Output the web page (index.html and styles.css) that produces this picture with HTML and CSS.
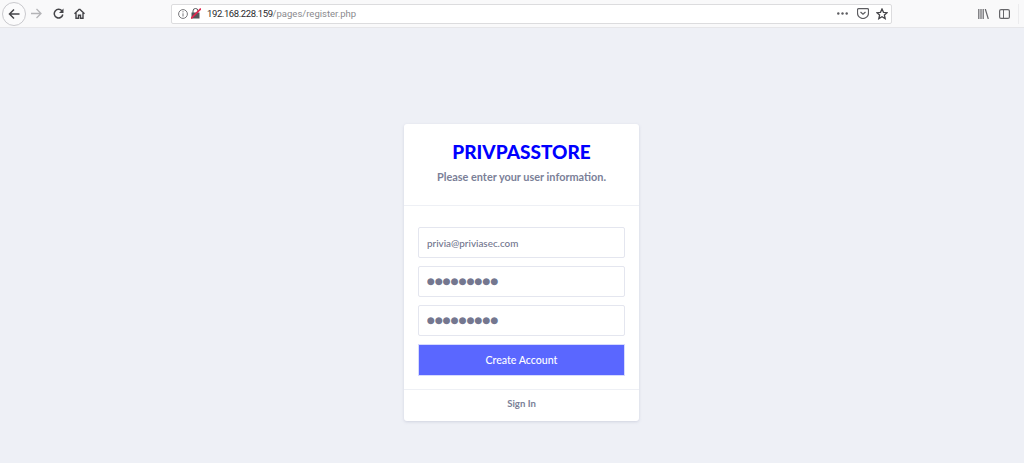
FILE: index.html
```html
<!DOCTYPE html>
<html lang="en">
<head>
    <meta charset="UTF-8">
    <title>Register</title>
    <link rel="stylesheet" href="styles.css">
</head>
<body>
    <!-- browser toolbar -->
    <div class="toolbar">
        <div class="nav">
            <span class="back">
                <svg width="12" height="12" viewBox="0 0 12 12"><path d="M11.500 6H1.500M6 1.500 1.500 6 6 10.500" fill="none" stroke="#444448" stroke-width="1.500"/></svg>
            </span>
            <svg class="forward" width="11" height="11" viewBox="0 0 11 11"><path d="M0 5.500h10M5.500 1l4.500 4.500L5.500 10" fill="none" stroke="#b4b4b7" stroke-width="1.300"/></svg>
            <svg class="reload" width="11" height="11" viewBox="0 0 11 11"><path d="M9 3A4.300 4.300 0 1 0 9.800 6.500" fill="none" stroke="#444448" stroke-width="1.500"/><path d="M10.500 .5v4.500H6z" fill="#444448"/></svg>
            <svg class="home" width="11" height="11" viewBox="0 0 11 11"><path d="M5.500 1 10.500 5.700M.5 5.700 5.500 1M2 5v5.300h2.500V7.300h2v3H9V5" fill="none" stroke="#444448" stroke-width="1.400"/></svg>
        </div>
        <div class="urlbar">
            <svg width="10" height="10" viewBox="0 0 10 10"><circle cx="5" cy="5" r="4.400" fill="none" stroke="#77777b"/><path d="M5 4.300v3.200M5 2.200v1.200" stroke="#77777b"/></svg>
            <svg class="lock" width="10" height="11" viewBox="0 0 10 11"><rect x="0.500" y="4.500" width="8" height="6" fill="#55555a"/><path d="M2 5V3a2.500 2.500 0 0 1 5 0v1" fill="none" stroke="#55555a"/><path d="M0 10.500 10 .5" stroke="#e22850" stroke-width="1.800"/></svg>
            <span class="url"><span class="host">192.168.228.159</span>/pages/register.php</span>
            <span class="url-actions">
                <svg class="more" width="11" height="3" viewBox="0 0 11 3"><circle cx="1.300" cy="1.500" r="1.200" fill="#5c5c60"/><circle cx="5.500" cy="1.500" r="1.200" fill="#5c5c60"/><circle cx="9.700" cy="1.500" r="1.200" fill="#5c5c60"/></svg>
                <svg class="pocket" width="12" height="11" viewBox="0 0 12 11"><path d="M1.500.7h9a1 1 0 0 1 1 1V5a5.500 5.500 0 0 1-11 0V1.700a1 1 0 0 1 1-1z" fill="none" stroke="#5c5c60" stroke-width="1.200"/><path d="M3.500 4 6 6.300 8.500 4" fill="none" stroke="#5c5c60" stroke-width="1.200"/></svg>
                <svg class="star" width="12" height="12" viewBox="0 0 12 12"><path d="M6 1l1.500 3.300 3.600.4-2.700 2.400.8 3.500L6 8.800l-3.200 1.800.8-3.500L.9 4.700l3.600-.4z" fill="none" stroke="#444448" stroke-width="1.300"/></svg>
            </span>
        </div>
        <div class="tools">
            <svg width="11" height="10" viewBox="0 0 11 10"><path d="M.8 0v10M3 0v10M5.200 0v10M7.300 0l3 10" fill="none" stroke="#66666a" stroke-width="1.200"/></svg>
            <svg width="11" height="10" viewBox="0 0 11 10"><rect x="0.600" y="0.600" width="9.800" height="8.800" rx="1.500" fill="none" stroke="#66666a" stroke-width="1.200"/><path d="M4.500 1v8" stroke="#66666a"/></svg>
            <span class="sep"></span>
        </div>
    </div>

    <div class="page">
        <div class="card">
            <div class="card-head">
                <h1>PRIVPASSTORE</h1>
                <p>Please enter your user information.</p>
            </div>
            <form class="card-form">
                <input class="field" type="text" value="privia@priviasec.com">
                <input class="field dots" type="text" value="●●●●●●●●●">
                <input class="field dots" type="text" value="●●●●●●●●●">
                <button type="button">Create Account</button>
            </form>
            <div class="card-foot">Sign In</div>
        </div>
    </div>
</body>
</html>
```
FILE: styles.css
```css
body {
    margin: 0;
    height: 463px;
    overflow: hidden;
    background-color: #eef0f6;
    font-family: "Lato", "Liberation Sans", sans-serif;
    color: #7b7f98;
}

.toolbar {
    display: flex;
    align-items: center;
    height: 27px;
    background-color: #f9f9fa;
    border-bottom: 1px solid #e6e6e9;
}

.nav {
    display: flex;
    align-items: center;
    width: 171px;
    padding-left: 2px;
    box-sizing: border-box;
}

.back {
    display: flex;
    align-items: center;
    justify-content: center;
    box-sizing: border-box;
    width: 24px;
    height: 24px;
    border: 1px solid #c9c9cd;
    border-radius: 50%;
    background-color: #fbfbfc;
}

.forward {
    margin-left: 5px;
}

.reload {
    margin-left: 11px;
}

.home {
    margin-left: 10px;
}

.urlbar {
    display: flex;
    align-items: center;
    width: 721px;
    height: 20px;
    box-sizing: border-box;
    padding: 0 3px 0 6px;
    background-color: #fff;
    border: 1px solid #dcdcde;
    border-radius: 2px;
}

.lock {
    margin-left: 3px;
}

.url {
    margin-left: 6px;
    font-family: "Roboto", sans-serif;
    font-size: 9.500px;
    color: #8a8a8e;
}

.host {
    color: #2a2a2e;
    letter-spacing: -0.4px;
}

.url-actions {
    display: flex;
    align-items: center;
    margin-left: auto;
}

.pocket {
    margin-left: 9px;
}

.star {
    margin-left: 7px;
}

.tools {
    display: flex;
    align-items: center;
    gap: 10px;
    margin-left: 86px;
}

.sep {
    width: 1px;
    height: 20px;
    margin-left: -2px;
    background-color: #ececee;
}

.page {
    padding: 96px 0 0 19px;
    display: flex;
    justify-content: center;
}

.card {
    width: 235px;
    height: 297px;
    background-color: #fff;
    border-radius: 3px;
    box-shadow: 0 1px 3px rgba(120, 125, 160, 0.25);
}

.card-head {
    height: 81px;
    border-bottom: 1px solid #eef0f5;
    text-align: center;
}

.card-head h1 {
    margin: 0;
    padding-top: 16px;
    font-family: "Lato", sans-serif;
    font-size: 19px;
    line-height: 24px;
    font-weight: 900;
    color: #0000ff;
}

.card-head p {
    margin: 5px 0 0;
    font-size: 10.900px;
    line-height: 16px;
    font-weight: 700;
}

.card-form {
    display: flex;
    flex-direction: column;
    gap: 8px;
    padding: 21px 14px 13px;
    border-bottom: 1px solid #eef0f5;
}

.field {
    height: 31px;
    box-sizing: border-box;
    padding: 0 8px;
    border: 1px solid #e4e6ef;
    border-radius: 2px;
    outline: none;
    font-family: "Lato", sans-serif;
    font-size: 9.900px;
    font-weight: 500;
    color: #70748c;
}

.dots {
    padding-bottom: 2px;
    font-family: "DejaVu Sans", sans-serif;
    font-size: 9.100px;
    color: #74778f;
}

.card-form button {
    height: 32px;
    padding: 0;
    border: 1px solid #d6dafe;
    background-color: #5a67ff;
    color: #fff;
    font-family: "Lato", sans-serif;
    font-size: 10.600px;
    font-weight: 500;
}

.card-foot {
    padding-top: 7px;
    text-align: center;
    font-size: 9.600px;
    line-height: 14px;
    font-weight: 700;
}
```
